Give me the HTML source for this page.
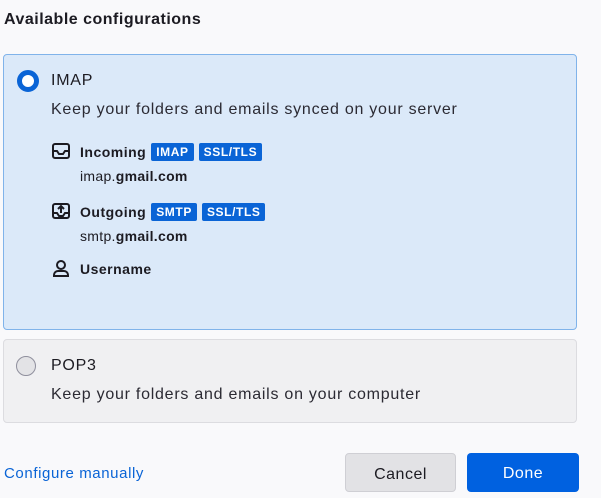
<!DOCTYPE html>
<html><head><style>
*{box-sizing:border-box;margin:0;padding:0}
body{width:601px;height:498px;background:#f9f9fb;font-family:"Liberation Sans",sans-serif;color:#1c1b22;position:relative;overflow:hidden}
.a{position:absolute;white-space:nowrap}
.box1{position:absolute;left:3px;top:54px;width:574px;height:276px;background:#dbe9f9;border:1px solid #80b3ea;border-radius:4px}
.box2{position:absolute;left:3px;top:339px;width:574px;height:84px;background:#f0f0f2;border:1px solid #dcdce0;border-radius:4px}
.b{font-size:14px;font-weight:bold;letter-spacing:0.5px}
.t{font-size:16px;letter-spacing:0.75px}
.tag{display:inline-block;background:#0a64d6;color:#fff;font-size:12px;font-weight:bold;padding:2px 5px;border-radius:2px;margin-left:5px;line-height:14px;vertical-align:1px;letter-spacing:0.6px}
.tag+.tag{margin-left:5px}
.btn{position:absolute;top:453px;height:39px;border-radius:4px;font-size:16px;text-align:center;line-height:41px;letter-spacing:0.5px}
</style></head><body>
<div class="a" style="left:4px;top:11px;font-size:16px;font-weight:bold;letter-spacing:0.5px">Available configurations</div>
<div class="box1"></div>
<div class="a" style="left:17px;top:70px;width:22px;height:22px;border-radius:50%;border:5px solid #0a64d6;background:#fff"></div>
<div class="a t" style="left:51px;top:72px">IMAP</div>
<div class="a t" style="left:51px;top:101px;color:#2b2a33">Keep your folders and emails synced on your server</div>
<svg class="a" style="left:51px;top:141px" width="20" height="20" viewBox="0 0 20 20" fill="none" stroke="#1c1b22" stroke-width="2"><rect x="2" y="3" width="16" height="14" rx="2"/><path d="M2 10h4l2 3h4l2-3h4"/></svg>
<div class="a b" style="left:80px;top:143px">Incoming<span class="tag">IMAP</span><span class="tag">SSL/TLS</span></div>
<div class="a" style="left:80px;top:168px;font-size:14px;letter-spacing:0.3px">imap.<b>gmail.com</b></div>
<svg class="a" style="left:51px;top:201px" width="20" height="20" viewBox="0 0 20 20" fill="none" stroke="#1c1b22" stroke-width="2"><rect x="2" y="3" width="16" height="14" rx="2"/><path d="M2 12h4l2 3h4l2-3h4M10 12V5M7 8l3-3 3 3"/></svg>
<div class="a b" style="left:80px;top:203px">Outgoing<span class="tag">SMTP</span><span class="tag">SSL/TLS</span></div>
<div class="a" style="left:80px;top:228px;font-size:14px;letter-spacing:0.3px">smtp.<b>gmail.com</b></div>
<svg class="a" style="left:52px;top:259px" width="18" height="18" viewBox="0 0 18 18" fill="none" stroke="#1c1b22" stroke-width="2"><circle cx="9" cy="6" r="4"/><path d="M2 17v-1a4 4 0 0 1 4-4h6a4 4 0 0 1 4 4v1z"/></svg>
<div class="a b" style="left:80px;top:261px">Username</div>
<div class="box2"></div>
<div class="a" style="left:16px;top:356px;width:20px;height:20px;border-radius:50%;border:1px solid #8f8f9d;background:#e3e3e6"></div>
<div class="a t" style="left:51px;top:357px">POP3</div>
<div class="a t" style="left:51px;top:386px;color:#2b2a33">Keep your folders and emails on your computer</div>
<div class="a" style="left:4px;top:465px;font-size:15px;letter-spacing:0.6px;color:#0a64d6">Configure manually</div>
<div class="btn" style="left:345px;width:111px;background:#e2e2e5;border:1px solid #cfcfd4">Cancel</div>
<div class="btn" style="left:467px;width:112px;background:#0061e0;color:#fff">Done</div>
</body></html>
